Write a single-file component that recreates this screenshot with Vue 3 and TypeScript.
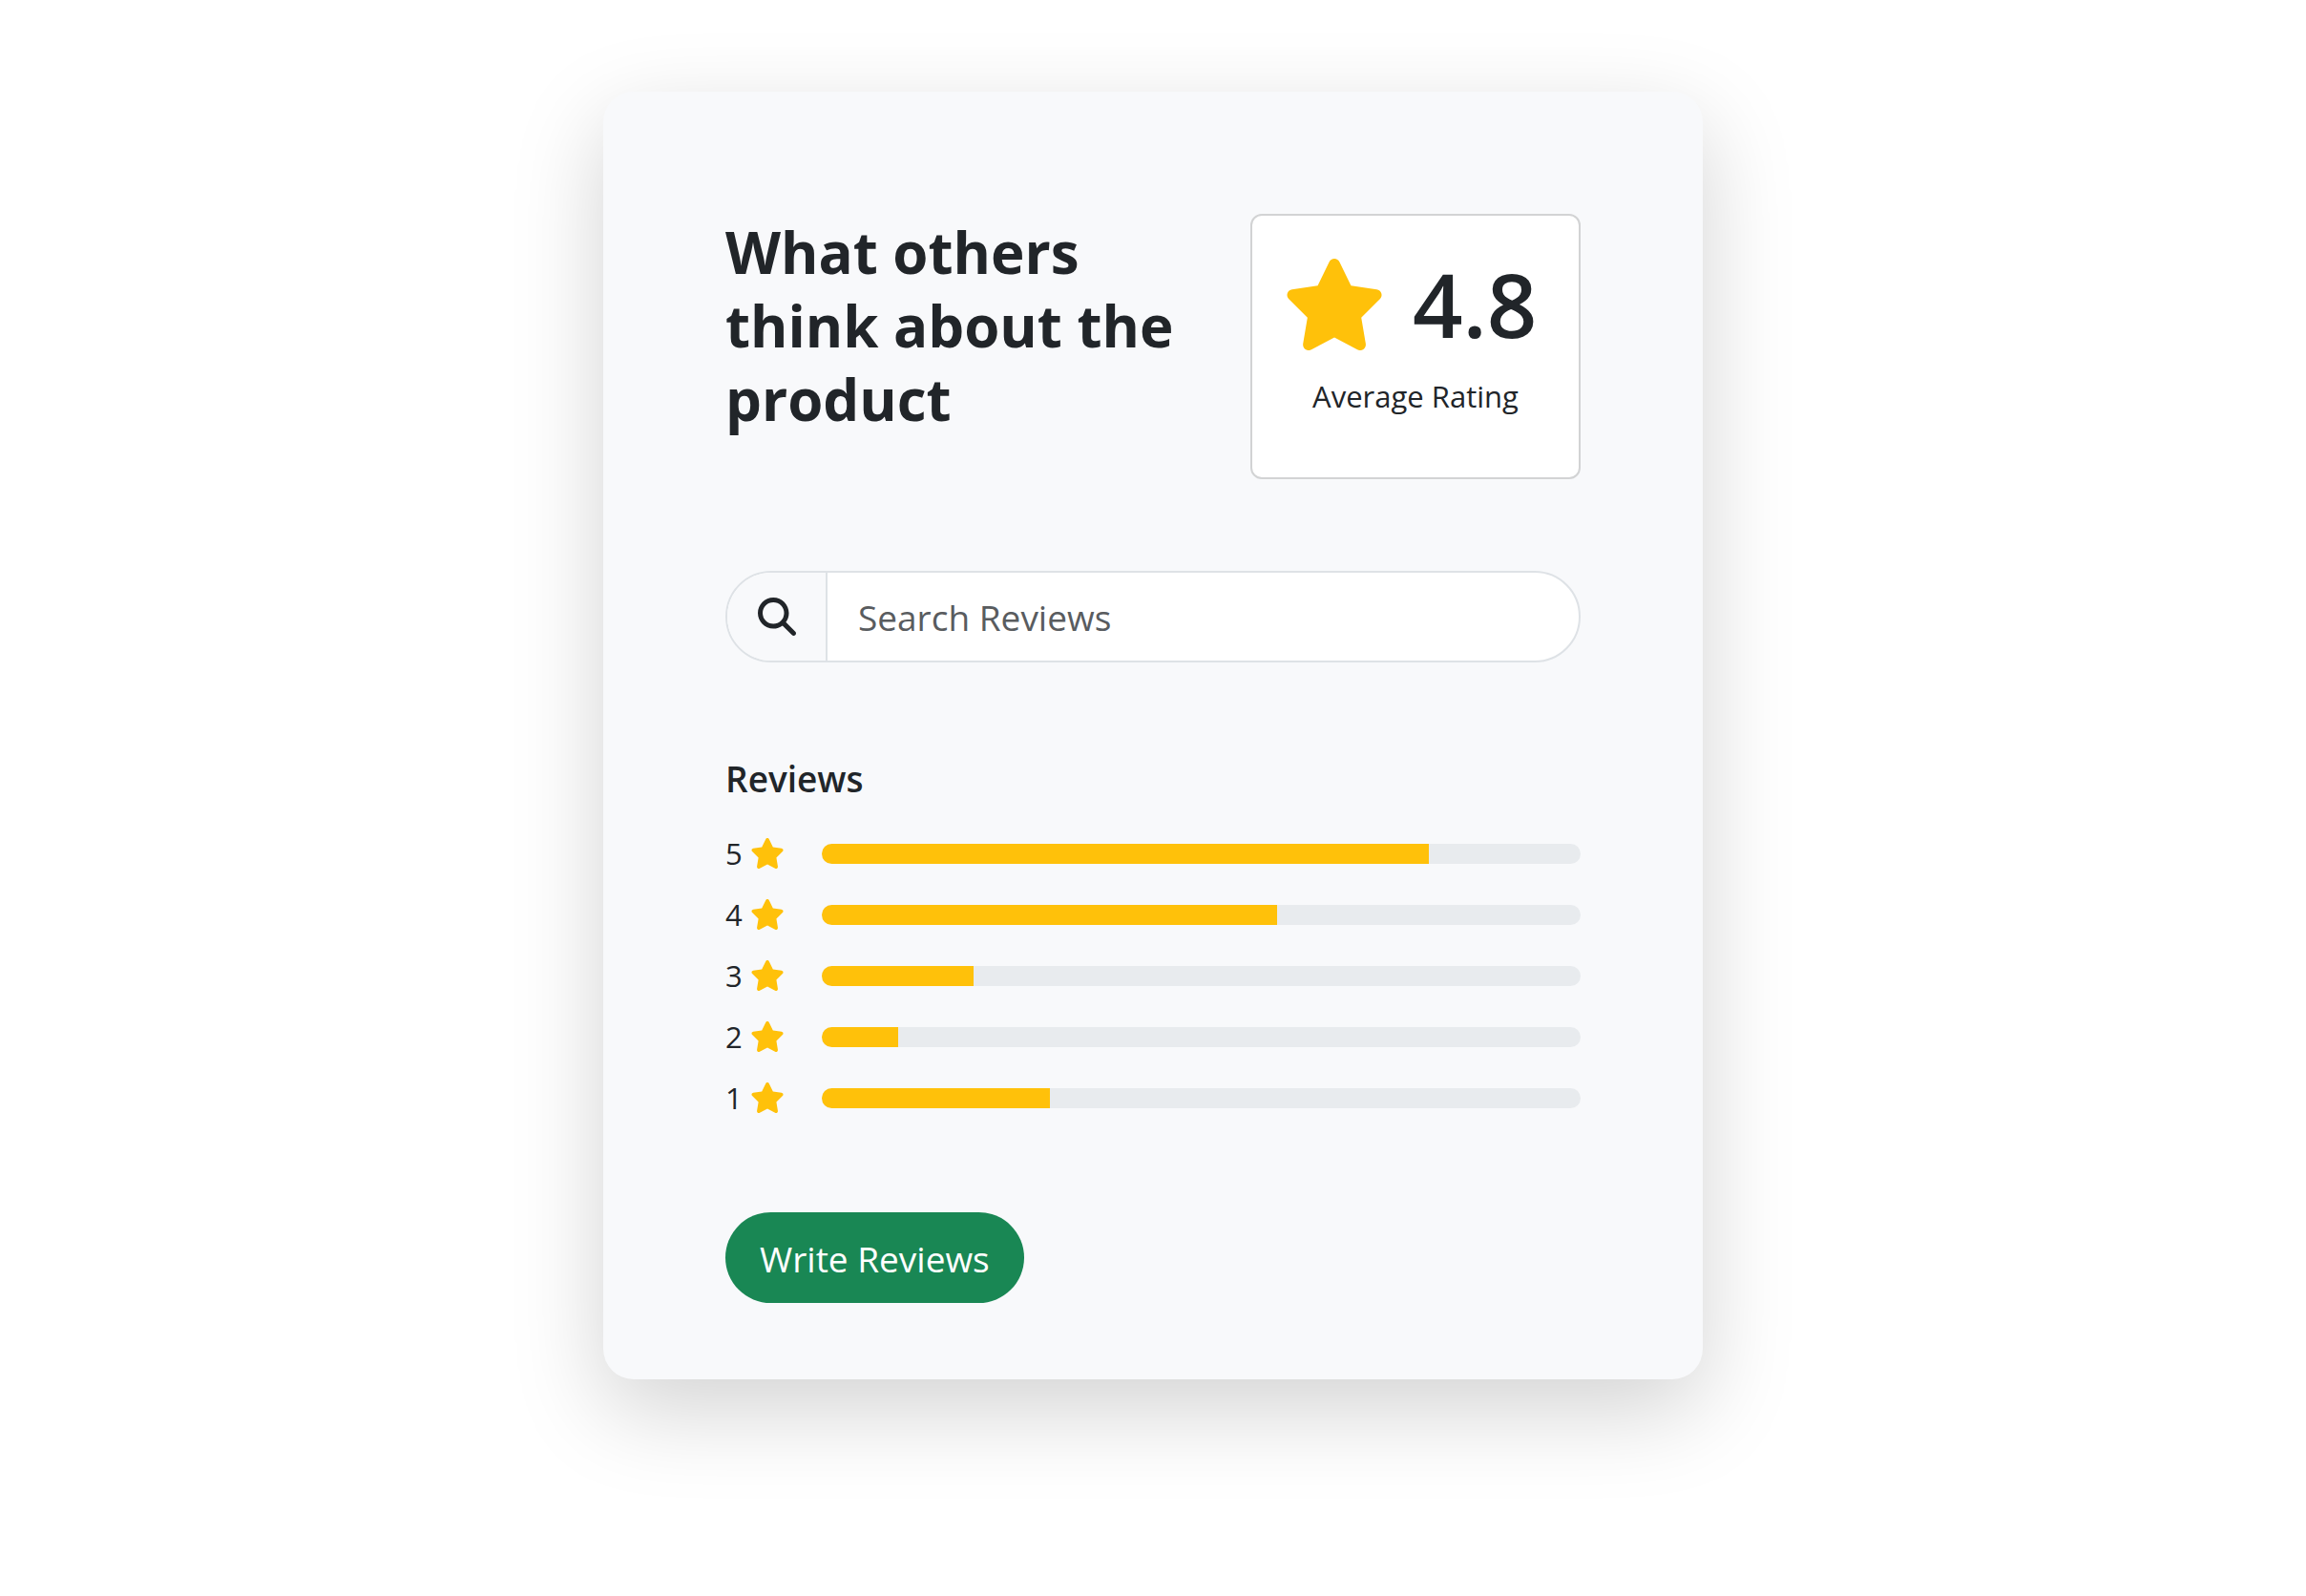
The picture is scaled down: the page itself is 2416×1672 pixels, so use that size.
<script setup lang="ts">
import { ref } from 'vue'

interface RatingRow {
  stars: number
  percent: number
}

const average = 4.8
const query = ref('')

const rows: RatingRow[] = [
  { stars: 5, percent: 80 },
  { stars: 4, percent: 60 },
  { stars: 3, percent: 20 },
  { stars: 2, percent: 10 },
  { stars: 1, percent: 30 },
]

const starPath =
  'M316.9 18C311.6 7 300.4 0 288.1 0s-23.4 7-28.8 18L195 150.3 51.4 171.5c-12 1.8-22 10.2-25.7 21.7s-.7 24.2 7.9 32.7L137.8 329 113.2 474.7c-2 12 3 24.2 12.9 31.3s23 8 33.8 2.3l128.3-68.5 128.3 68.5c10.8 5.7 23.9 4.9 33.8-2.3s14.9-19.3 12.9-31.3L438.5 329 542.7 225.9c8.6-8.5 11.7-21.2 7.9-32.7s-13.7-19.9-25.7-21.7L381.2 150.3 316.9 18z'
const searchPath =
  'M416 208c0 45.9-14.9 88.3-40 122.7L502.6 457.4c12.5 12.5 12.5 32.8 0 45.3s-32.8 12.5-45.3 0L330.7 376c-34.4 25.2-76.8 40-122.7 40C93.1 416 0 322.9 0 208S93.1 0 208 0S416 93.1 416 208zM208 352a144 144 0 1 0 0-288 144 144 0 1 0 0 288z'
</script>

<template>
  <div class="page">
    <main class="card">
      <header class="header">
        <h1 class="title">What others think about the product</h1>
        <section class="rating">
          <div class="score">
            <svg class="star-large" viewBox="0 0 576 512" aria-hidden="true"><path :d="starPath" /></svg>
            <span class="score-value">{{ average }}</span>
          </div>
          <p class="score-label">Average Rating</p>
        </section>
      </header>

      <form class="search" role="search" @submit.prevent>
        <label class="search-icon" for="review-search" aria-label="Search Reviews">
          <svg viewBox="0 0 512 512" aria-hidden="true"><path :d="searchPath" /></svg>
        </label>
        <input id="review-search" v-model="query" class="search-input" type="text" placeholder="Search Reviews" />
      </form>

      <section class="reviews">
        <h2 class="reviews-title">Reviews</h2>
        <ul class="bars">
          <li v-for="row in rows" :key="row.stars" class="bar-row">
            <span class="bar-label">
              {{ row.stars }}
              <svg class="star-small" viewBox="0 0 576 512" aria-hidden="true"><path :d="starPath" /></svg>
            </span>
            <div
              class="track"
              role="progressbar"
              aria-valuemin="0"
              aria-valuemax="100"
              :aria-valuenow="row.percent"
              :aria-label="`${row.stars} star reviews`"
            >
              <div class="fill" :style="{ width: `${row.percent}%` }"></div>
            </div>
          </li>
        </ul>
      </section>

      <button class="write" type="button">Write Reviews</button>
    </main>
  </div>
</template>

<style>
body {
  background: #fff;
}
</style>

<style scoped>
.page {
  box-sizing: border-box;
  min-height: 100vh;
  padding: 96px 0;
}

.card {
  box-sizing: border-box;
  width: 100%;
  max-width: 1152px;
  margin: 0 auto;
  padding: 128px 128px 80px;
  border-radius: 32px;
  background: #f8f9fb;
  box-shadow: 0 32px 96px rgba(0, 0, 0, 0.175);
  color: #212529;
  font-family: 'Open Sans', 'Noto Sans', sans-serif;
  font-size: 31px;
  line-height: 48px;
}

.header {
  display: flex;
  gap: 48px;
}

.title {
  flex: 1;
  margin: 0;
  padding-top: 2px;
  font-size: 60px;
  font-weight: 700;
  line-height: 77px;
}

.rating {
  box-sizing: border-box;
  flex: 0 0 346px;
  height: 278px;
  padding: 33px 32px;
  border: 2px solid #d2d3d4;
  border-radius: 12px;
  background: #fff;
  text-align: center;
}

.score {
  display: flex;
  align-items: center;
  gap: 28px;
  height: 120px;
}

.star-large {
  width: 108px;
  height: 96px;
  fill: #ffc10a;
}

.score-value {
  font-size: 92px;
  font-weight: 600;
}

.score-label {
  margin: 12px 0 0;
}

.search {
  box-sizing: border-box;
  display: flex;
  height: 96px;
  margin-top: 96px;
  overflow: hidden;
  border: 2px solid #dee2e6;
  border-radius: 48px;
  background: #fff;
}

.search-icon {
  box-sizing: border-box;
  display: flex;
  align-items: center;
  flex: 0 0 105px;
  padding-left: 32px;
  border-right: 2px solid #dee2e6;
  background: #f8f9fb;
}

.search-icon svg {
  width: 40px;
  height: 40px;
  fill: #212529;
}

.search-input {
  flex: 1;
  min-width: 0;
  padding: 2px 32px 0;
  border: 0;
  outline: 0;
  background: transparent;
  color: inherit;
  font: inherit;
  font-size: 37px;
}

.search-input::placeholder {
  color: #595c5f;
  opacity: 1;
}

.reviews {
  margin-top: 98px;
}

.reviews-title {
  margin: 0 0 30px;
  font-size: 37px;
  font-weight: 600;
  line-height: 48px;
}

.bars {
  display: flex;
  flex-direction: column;
  gap: 16px;
  margin: 0;
  padding: 0;
  list-style: none;
}

.bar-row {
  display: flex;
  align-items: center;
  height: 48px;
}

.bar-label {
  display: flex;
  align-items: center;
  flex: 0 0 101px;
  gap: 8px;
}

.star-small {
  width: 36px;
  height: 32px;
  fill: #ffc10a;
}

.track {
  flex: 1;
  height: 21px;
  overflow: hidden;
  border-radius: 12px;
  background: #e8ebee;
}

.fill {
  height: 100%;
  background: #ffc10a;
}

.write {
  display: block;
  height: 95px;
  margin: 96px 0 0;
  padding: 2px 36px 0;
  border: 0;
  border-radius: 48px;
  background: #198754;
  color: #fff;
  font: inherit;
  font-size: 37px;
}
</style>
